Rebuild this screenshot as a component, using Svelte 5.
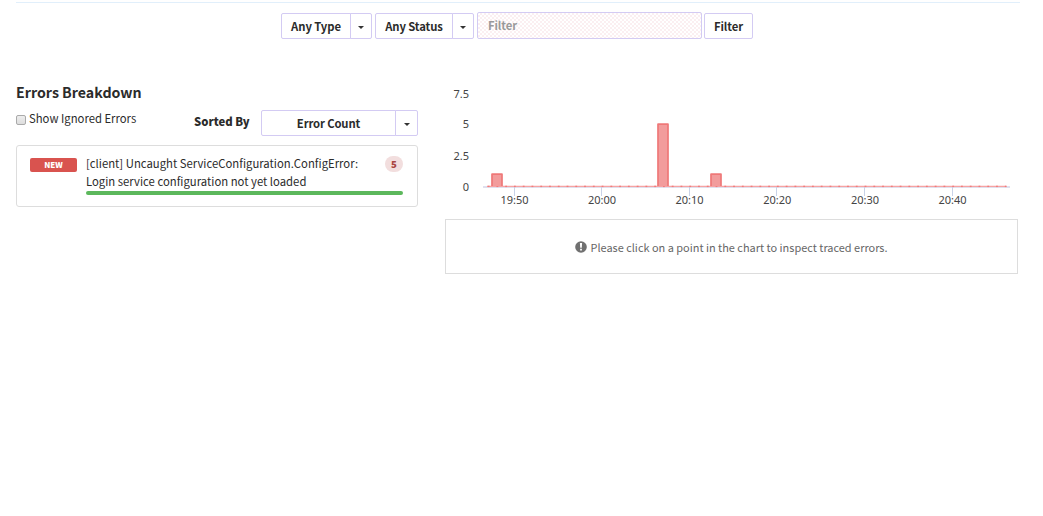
<script>
  const ticks = [
    { x: 514.5, label: '19:50' },
    { x: 602, label: '20:00' },
    { x: 689.5, label: '20:10' },
    { x: 777.3, label: '20:20' },
    { x: 865, label: '20:30' },
    { x: 952.5, label: '20:40' }
  ];
  const levels = [
    { y: 94.3, label: '7.5' },
    { y: 124.4, label: '5' },
    { y: 156, label: '2.5' },
    { y: 187, label: '0' }
  ];
  const bars = [
    { x: 492, h: 13 },
    { x: 658, h: 63 },
    { x: 711, h: 13 }
  ];
  const minutes = Array.from({ length: 60 }, (_, i) => 488.5 + i * 8.765);
</script>

<div class="page">
  <div class="toolbar">
    <div class="split type"><button>Any Type</button><button class="arrow" aria-label="Type"><i></i></button></div>
    <div class="split status"><button>Any Status</button><button class="arrow" aria-label="Status"><i></i></button></div>
    <input placeholder="Filter" aria-label="Filter" />
    <button class="go">Filter</button>
  </div>

  <div class="columns">
    <section class="left">
      <h2>Errors Breakdown</h2>
      <div class="controls">
        <div class="check"><span class="box"></span><span>Show Ignored Errors</span></div>
        <strong>Sorted By</strong>
        <div class="split sort"><button>Error Count</button><button class="arrow" aria-label="Sort"><i></i></button></div>
      </div>
      <article>
        <span class="new">NEW</span>
        <div class="body">
          <div class="msg"><p>[client] Uncaught ServiceConfiguration.ConfigError:<br />Login service configuration not yet loaded</p><span class="count">5</span></div>
          <div class="progress"></div>
        </div>
      </article>
    </section>

    <section class="right">
      <svg class="chart" width="573" height="136" viewBox="445 83 573 136">
        <path d="M483 187H1010" stroke="#dfe0ee" stroke-width="2" />
        {#each ticks as t}
          <path d="M{Math.round(t.x) - 0.5} 187V196" stroke="#c9d3e8" />
          <text x={t.x} y="204" text-anchor="middle">{t.label}</text>
        {/each}
        {#each levels as l}
          <text x="469" y={l.y + 4} text-anchor="end">{l.label}</text>
        {/each}
        <path d="M487 186.4H1006" stroke="#f6a3a3" stroke-width="1.3" />
        {#each minutes as x}
          <rect x={x - 0.8} y="185.7" width="1.8" height="1.4" fill="#f07c7c" />
        {/each}
        {#each bars as b}
          <rect x={b.x} y={187 - b.h} width="10" height={b.h - 1} fill="#f29c9c" />
          <path d="M{b.x} 186V{187.2 - b.h}H{b.x + 10}V186" fill="none" stroke="#ef7878" stroke-width="1.7" stroke-linejoin="round" />
        {/each}
      </svg>
      <div class="notice">
        <svg width="12" height="12" viewBox="0 0 12 12"><circle cx="6" cy="6" r="5.8" fill="#707070" /><path d="M4.9 2H7.1L6.8 6.8H5.2ZM5.1 7.8H6.9V9.6H5.1Z" fill="#fff" /></svg>
        <span>Please click on a point in the chart to inspect traced errors.</span>
      </div>
    </section>
  </div>
</div>

<style>
  :global(body) { background: #fff; }
  .page, button, input { font-family: 'Noto Sans CJK SC', sans-serif; color: #2b2b2b; }
  .page { height: 516px; overflow: hidden; box-sizing: border-box; padding: 2px 23px 0 16px; font-size: 11.3px; }
  .page *, .page { box-sizing: border-box; }
  button, input { margin: 0; padding: 0; border: 1px solid #d3cbf3; border-radius: 2px; background: #fff; font-size: 11.3px; font-weight: 700; letter-spacing: -0.1px; line-height: 18px; }
  .toolbar { display: flex; align-items: flex-end; gap: 3px; height: 37px; padding-left: 265px; border-top: 1px solid #e1effb; }
  .split { display: flex; height: 26px; }
  .split button:first-child { flex: 1; border-radius: 2px 0 0 2px; }
  .split .arrow { width: 22px; margin-left: -1px; border-radius: 0 2px 2px 0; display: flex; align-items: center; justify-content: center; }
  .arrow i { border: 3px solid transparent; border-top-color: #333; border-bottom: 0; margin-top: 3px; }
  .type { width: 91px; }
  .status { width: 99px; }
  input {
    width: 225px; height: 27px; padding: 0 10px 1px;
    background: repeating-conic-gradient(#fbeff1 0 25%, #fff 0 50%) 0 0 / 4px 4px;
  }
  input::placeholder { color: #999; opacity: 1; }
  .go { width: 49px; height: 26px; margin-left: -1px; }
  .columns { display: flex; gap: 27px; padding-top: 44px; }
  .left { width: 402px; }
  .right { width: 573px; }
  h2 { margin: -1px 0 0; font-size: 14.2px; font-weight: 700; line-height: 20px; height: 28px; }
  .controls { display: flex; height: 35px; align-items: flex-start; }
  .check { display: flex; width: 178px; line-height: 17px; }
  .box { width: 10px; height: 10px; margin: 5px 3px 0 0; border: 1px solid #aaa; border-radius: 2px; background: linear-gradient(#eee, #ddd); }
  strong { width: 67px; line-height: 23px; font-weight: 900; }
  .sort { width: 157px; }
  .sort .arrow { width: 23px; }
  .sort button:first-child { letter-spacing: -0.15px; }
  article { display: flex; height: 62px; border: 1px solid #ddd; border-radius: 3px; padding: 8px 14px 0 13px; }
  .new { width: 47px; height: 14px; margin: 4px 9px 0 0; border-radius: 2px; background: #d9534f; color: #fff; font-weight: 900; font-size: 8px; line-height: 13px; text-align: center; }
  .body { flex: 1; }
  .msg { display: flex; justify-content: space-between; height: 37px; }
  p { margin: 0; line-height: 18px; white-space: nowrap; letter-spacing: 0.01px; }
  .count { width: 18px; height: 16px; margin-top: 2px; border-radius: 8px; background: #f2dede; color: #a94442; font-size: 9.5px; font-weight: 900; line-height: 16px; text-align: center; }
  .progress { height: 4px; border-radius: 2px; background: #5cb85c; }
  .chart { display: block; }
  .chart text { font: 11px 'Noto Sans', sans-serif; fill: #444; }
  .notice { height: 55px; border: 1px solid #ddd; display: flex; align-items: center; justify-content: center; gap: 3px; color: #666; font-size: 10.95px; }
</style>
